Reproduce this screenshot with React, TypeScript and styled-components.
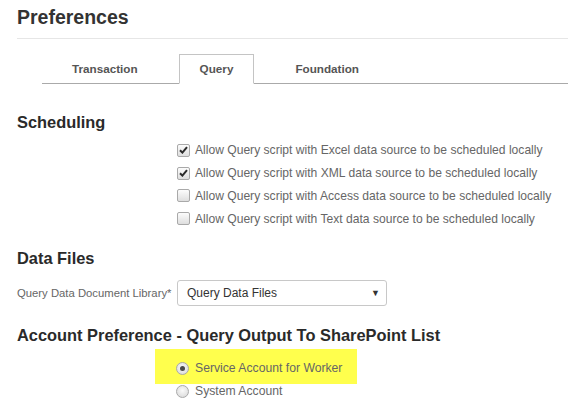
import React from "react";
import styled, { createGlobalStyle } from "styled-components";

const GlobalStyle = createGlobalStyle`
  html, body {
    margin: 0;
    padding: 0;
    background: #ffffff;
  }
  body {
    font-family: "Liberation Sans", Arial, sans-serif;
    color: #333;
  }
`;

const Page = styled.div`
  width: 568px;
  height: 413px;
  overflow: hidden;
  padding-left: 17px;
  box-sizing: border-box;
`;

const Title = styled.h1`
  margin: 0;
  height: 38px;
  line-height: 34px;
  font-size: 19.5px;
  font-weight: bold;
  color: #333;
  border-bottom: 1px solid #e6e6e6;
`;

const TabBar = styled.ul`
  list-style: none;
  display: flex;
  align-items: flex-start;
  gap: 20px;
  height: 29px;
  margin: 15px 0 0 25px;
  padding: 0 0 0 9px;
  border-bottom: 1px solid #aaa;
`;

const Tab = styled.li<{ $active?: boolean }>`
  box-sizing: border-box;
  height: 30px;
  padding: 0 20px;
  line-height: 28px;
  font-size: 11.7px;
  font-weight: bold;
  color: #555;
  background: ${(p) => (p.$active ? "#fff" : "transparent")};
  border: 1px solid ${(p) => (p.$active ? "#c4c4c4" : "transparent")};
  border-bottom-color: ${(p) => (p.$active ? "#fff" : "transparent")};
`;

const Heading = styled.h2<{ $top: number }>`
  margin: ${(p) => p.$top}px 0 0;
  font-size: 16.4px;
  line-height: 20px;
  font-weight: bold;
  color: #2a2a2a;
`;

const OptionList = styled.div<{ $top: number }>`
  display: flex;
  flex-direction: column;
  margin: ${(p) => p.$top}px 0 0 160px;
`;

const OptionRow = styled.label`
  display: flex;
  align-items: center;
  gap: 5px;
  height: 22.8px;
  font-size: 12.1px;
  color: #666;
`;

const Box = styled.span`
  box-sizing: border-box;
  width: 13px;
  height: 13px;
  border: 1px solid #a9a9a9;
  border-radius: 2px;
  background: linear-gradient(#fcfcfc, #dedede);
  display: flex;
  align-items: center;
  justify-content: center;
  flex-shrink: 0;
`;

const Radio = styled.span<{ $checked?: boolean }>`
  box-sizing: border-box;
  width: 13px;
  height: 13px;
  border: 1px solid #a9a9a9;
  border-radius: 50%;
  background: radial-gradient(circle at 50% 40%, #fafafa, #d6d6d6);
  display: flex;
  align-items: center;
  justify-content: center;
  flex-shrink: 0;
  &::after {
    content: "";
    width: 5px;
    height: 5px;
    border-radius: 50%;
    background: ${(p) => (p.$checked ? "#4a4a4a" : "transparent")};
  }
`;

const FieldRow = styled.div`
  display: flex;
  align-items: center;
  margin-top: 11.5px;
`;

const FieldLabel = styled.span`
  width: 160px;
  font-size: 11.3px;
  color: #666;
  white-space: nowrap;
`;

const Select = styled.div`
  box-sizing: border-box;
  width: 210px;
  height: 26px;
  border: 1px solid #c8c8c8;
  border-radius: 3px;
  display: flex;
  align-items: center;
  justify-content: space-between;
  padding: 0 6px 0 9px;
  font-size: 12px;
  color: #333;
`;

const Arrow = styled.span`
  font-size: 9px;
  color: #333;
`;

const RadioGroup = styled.div`
  display: flex;
  flex-direction: column;
  margin: 4px 0 0 138px;
`;

const Highlight = styled.div`
  width: 202px;
  height: 35px;
  box-sizing: border-box;
  padding: 8px 0 0 21px;
  margin-bottom: -4px;
  background: #ffff4d;
`;

const RadioRow = styled.label`
  display: flex;
  align-items: center;
  gap: 6px;
  height: 23px;
  font-size: 12.2px;
  color: #666;
`;

const Indented = styled.div`
  padding-left: 21px;
`;

const Check = () => (
  <svg width="9" height="8" viewBox="0 0 9 8">
    <path d="M1 4.2 L3.4 6.6 L8 1.2" stroke="#2b2b2b" strokeWidth="2" fill="none" />
  </svg>
);

const schedules = [
  { label: "Allow Query script with Excel data source to be scheduled locally", checked: true },
  { label: "Allow Query script with XML data source to be scheduled locally", checked: true },
  { label: "Allow Query script with Access data source to be scheduled locally", checked: false },
  { label: "Allow Query script with Text data source to be scheduled locally", checked: false },
];

const App: React.FC = () => {
  return (
    <>
      <GlobalStyle />
      <Page>
        <Title>Preferences</Title>
        <TabBar>
          <Tab>Transaction</Tab>
          <Tab $active>Query</Tab>
          <Tab>Foundation</Tab>
        </TabBar>

        <Heading $top={28}>Scheduling</Heading>
        <OptionList $top={7}>
          {schedules.map((s) => (
            <OptionRow key={s.label}>
              <Box>{s.checked && <Check />}</Box>
              {s.label}
            </OptionRow>
          ))}
        </OptionList>

        <Heading $top={18}>Data Files</Heading>
        <FieldRow>
          <FieldLabel>Query Data Document Library*</FieldLabel>
          <Select>
            Query Data Files
            <Arrow>▼</Arrow>
          </Select>
        </FieldRow>

        <Heading $top={19}>Account Preference - Query Output To SharePoint List</Heading>
        <RadioGroup>
          <Highlight>
            <RadioRow>
              <Radio $checked />
              Service Account for Worker
            </RadioRow>
          </Highlight>
          <Indented>
            <RadioRow>
              <Radio />
              System Account
            </RadioRow>
          </Indented>
        </RadioGroup>
      </Page>
    </>
  );
};

export default App;
